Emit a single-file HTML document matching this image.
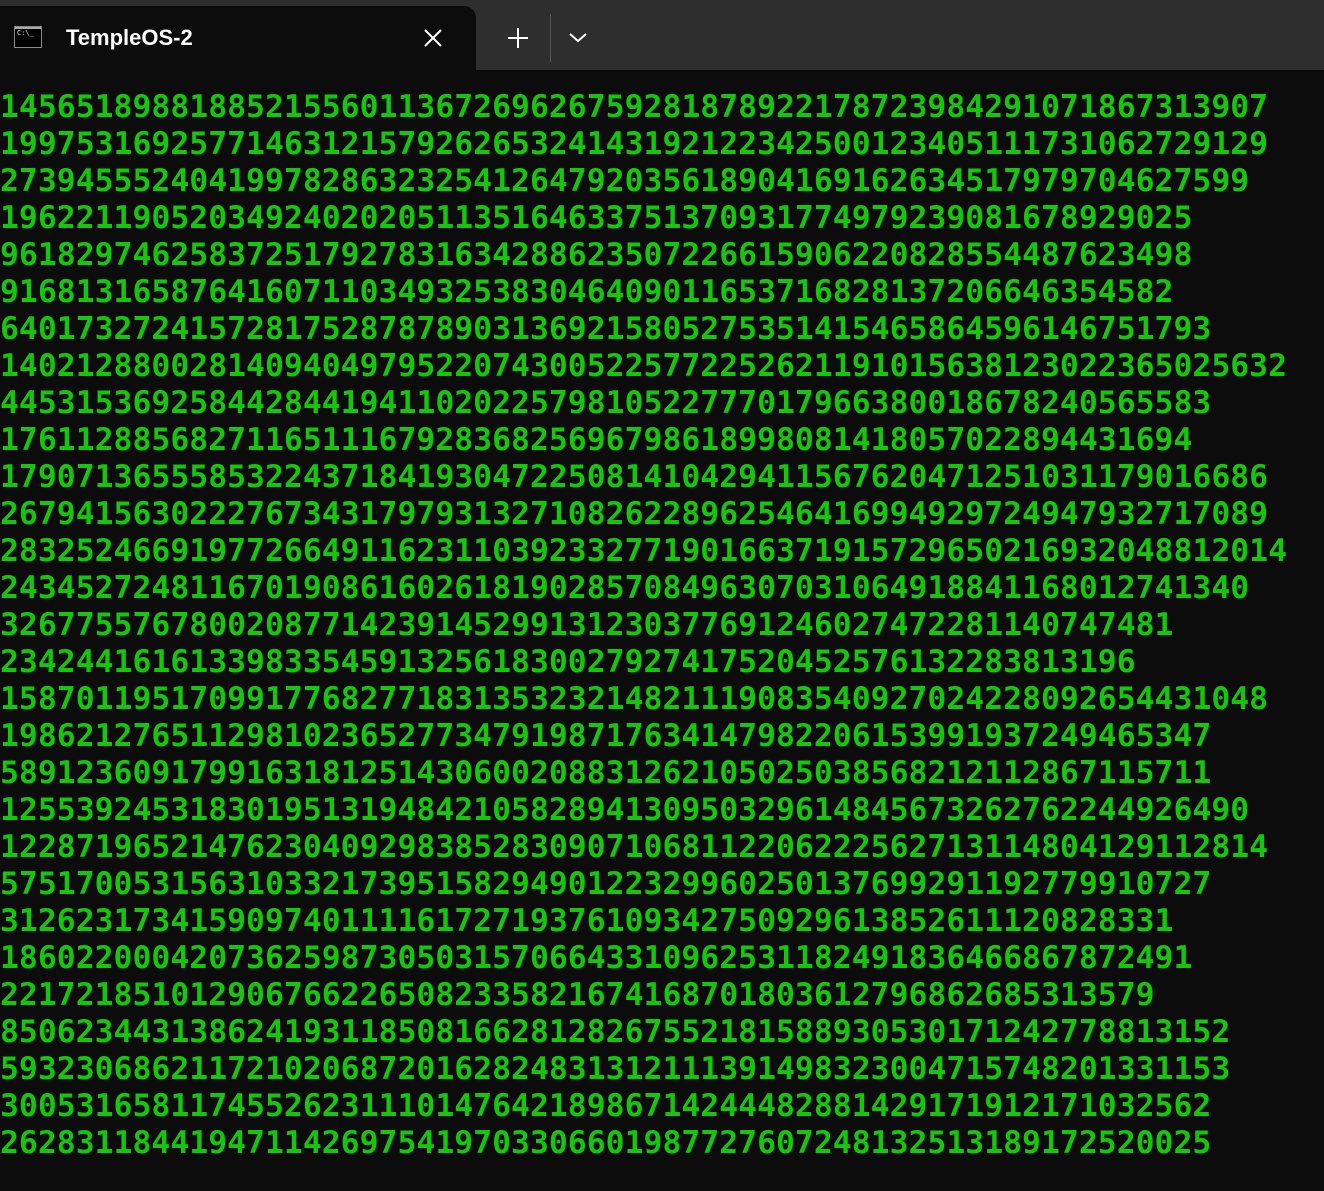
<!DOCTYPE html>
<html><head><meta charset="utf-8"><style>
html,body{margin:0;padding:0;width:1324px;height:1191px;background:#0c0c0c;overflow:hidden}
.bar{position:absolute;left:0;top:0;width:1324px;height:70px;background:#2e2e2e}
.tab{position:absolute;left:0;top:6px;width:476px;height:64px;background:#0c0c0c;border-radius:0 12px 0 0}
.title{position:absolute;left:66px;top:25px;font:600 22px "Liberation Sans","DejaVu Sans",sans-serif;color:#fff}
.icon{position:absolute;left:14px;top:26px;width:28px;height:22px;background:#000;border:1px solid #888;box-sizing:border-box}
.icon:before{content:"";position:absolute;left:0;top:0;right:0;height:2px;background:#aaa}
.icon span{position:absolute;left:2px;top:2px;font:7px "DejaVu Sans Mono",monospace;color:#ddd}
.sep{position:absolute;left:550px;top:14px;width:1px;height:48px;background:#555}
pre{position:absolute;left:0;top:89px;margin:0;font:bold 31.45px/37px "DejaVu Sans Mono",monospace;color:#16c60c}
</style></head><body>
<div class="bar"></div>
<div class="tab"></div>
<div class="icon"><span>C:\_</span></div>
<div class="title">TempleOS-2</div>
<svg style="position:absolute;left:424px;top:29px" width="18" height="18"><path d="M1 1L17 17M17 1L1 17" stroke="#fff" stroke-width="2"/></svg>
<svg style="position:absolute;left:508px;top:28px" width="20" height="20"><path d="M10 0V20M0 10H20" stroke="#fff" stroke-width="2"/></svg>
<div class="sep"></div>
<svg style="position:absolute;left:569px;top:33px" width="18" height="10"><path d="M1 1L9 8L17 1" stroke="#fff" stroke-width="2" fill="none"/></svg>
<pre>1456518988188521556011367269626759281878922178723984291071867313907
1997531692577146312157926265324143192122342500123405111731062729129
273945552404199782863232541264792035618904169162634517979704627599
196221190520349240202051135164633751370931774979239081678929025
961829746258372517927831634288623507226615906220828554487623498
91681316587641607110349325383046409011653716828137206646354582
6401732724157281752878789031369215805275351415465864596146751793
14021288002814094049795220743005225772252621191015638123022365025632
4453153692584428441941102022579810522777017966380018678240565583
176112885682711651116792836825696798618998081418057022894431694
1790713655585322437184193047225081410429411567620471251031179016686
2679415630222767343179793132710826228962546416994929724947932717089
28325246691977266491162311039233277190166371915729650216932048812014
243452724811670190861602618190285708496307031064918841168012741340
32677557678002087714239145299131230377691246027472281140747481
234244161613398335459132561830027927417520452576132283813196
1587011951709917768277183135323214821119083540927024228092654431048
1986212765112981023652773479198717634147982206153991937249465347
5891236091799163181251430600208831262105025038568212112867115711
125539245318301951319484210582894130950329614845673262762244926490
1228719652147623040929838528309071068112206222562713114804129112814
5751700531563103321739515829490122329960250137699291192779910727
31262317341590974011116172719376109342750929613852611120828331
186022000420736259873050315706643310962531182491836466867872491
2217218510129067662265082335821674168701803612796862685313579
85062344313862419311850816628128267552181588930530171242778813152
59323068621172102068720162824831312111391498323004715748201331153
3005316581174552623111014764218986714244482881429171912171032562
2628311844194711426975419703306601987727607248132513189172520025</pre>
</body></html>
